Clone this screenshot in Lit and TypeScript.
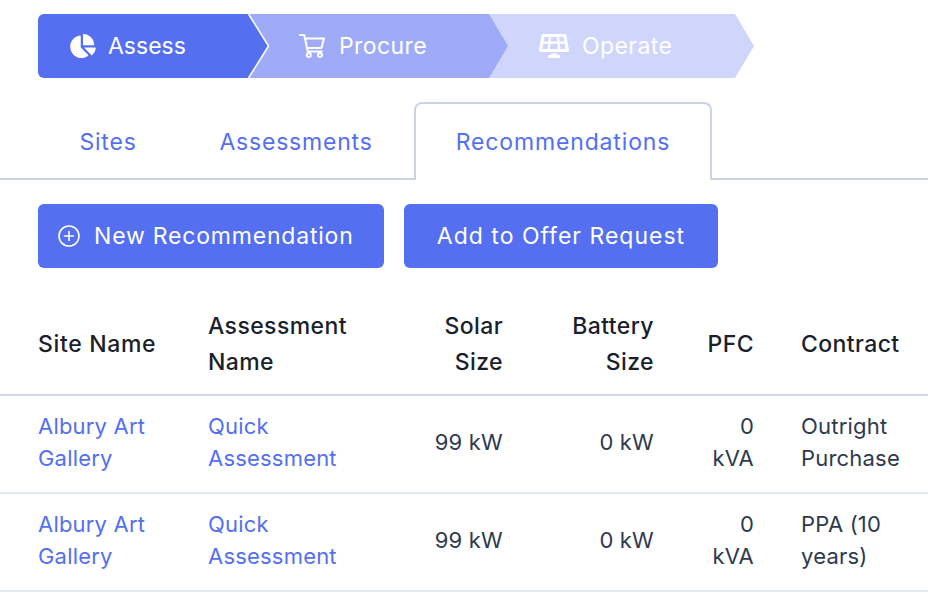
import { LitElement, html, css, svg } from "lit";
import { customElement } from "lit/decorators.js";

const PIE = "M527.79 288H290.5l158.03 158.03c6.04 6.04 15.98 6.53 22.19.68 38.7-36.46 65.32-85.61 73.13-140.86 1.34-9.46-6.51-17.85-16.06-17.85zm-15.83-64.8C503.72 103.74 408.26 8.28 288.8.04 279.68-.59 272 7.1 272 16.24V240h223.77c9.14 0 16.82-7.68 16.19-16.8zM224 288V50.71c0-9.55-8.39-17.4-17.84-16.06C86.99 51.49-4.1 155.6.14 280.37 4.5 408.51 114.83 513.59 243.03 511.98c50.4-.63 96.97-16.87 135.26-44.03 7.9-5.6 8.42-17.23 1.57-24.08L224 288z";
const SOLAR = "M431.98 448.01l-47.97.05V416h-128v32.21l-47.98.05c-8.82.01-15.97 7.16-15.98 15.99l-.05 31.73c-.01 8.85 7.17 16.03 16.02 16.02l223.96-.26c8.82-.01 15.97-7.16 15.98-15.98l.04-31.73c.01-8.85-7.17-16.03-16.02-16.02zM585.2 26.74C582.58 11.31 568.99 0 553.06 0H86.93C71 0 57.41 11.31 54.79 26.74-3.32 369.16.04 348.08.03 352c-.03 17.32 14.29 32 32.6 32h574.74c18.23 0 32.51-14.56 32.59-31.79.02-4.08 3.35 16.95-54.76-325.47zM259.83 64h120.33l9.77 96H250.06l9.77-96zm-75.17 256H71.09L90.1 208h105.97l-11.41 112zm16.29-160H98.24l16.29-96h96.19l-9.77 96zm32.82 160l11.4-112h149.65l11.4 112H233.77zm195.5-256h96.19l16.29 96H439.04l-9.77-96zm26.06 256l-11.4-112H549.9l19 112H455.33z";

const rows = [
  { contract: ["Outright", "Purchase"] },
  { contract: ["PPA (10", "years)"] },
];

@customElement("app-root")
export class AppRoot extends LitElement {
  static styles = css`
    :host {
      display: block;
      width: 928px;
      height: 614px;
      overflow: hidden;
      background: #fff;
      font-family: Inter, "Liberation Sans", sans-serif;
      font-size: 22px;
      color: #2e3a4e;
    }
    .steps { display: flex; padding: 14px 0 0 38px; height: 64px; }
    .step { display: grid; height: 64px; color: #fff; font-size: 23px; letter-spacing: 0.42px; }
    .step > * { grid-area: 1 / 1; }
    .step svg.bg { display: block; overflow: visible; }
    .s1 { width: 231px; z-index: 3; letter-spacing: 0; }
    .s2 { width: 260px; margin-left: -21px; z-index: 2; }
    .s3 { width: 267px; margin-left: -21px; z-index: 1; }
    .lbl { display: flex; align-items: center; height: 64px; z-index: 1; }
    .s1 .lbl { padding-left: 32px; gap: 12px; }
    .s2 .lbl { padding-left: 51px; gap: 14px; }
    .s3 .lbl { padding-left: 52px; gap: 13px; }
    .tabs {
      display: flex;
      margin-top: 24px;
      padding-left: 38px;
      border-bottom: 2px solid #cdd3e6;
      height: 76px;
    }
    .tab {
      box-sizing: border-box;
      height: 78px;
      text-align: center;
      line-height: 32px;
      padding-top: 22px;
      font-size: 23px;
      color: #546fef;
      letter-spacing: 0.8px;
      border: 2px solid transparent;
      border-bottom: 0;
    }
    .tab.active {
      border-color: #cdd3e6;
      border-radius: 8px 8px 0 0;
      background: #fff;
      letter-spacing: 0.85px;
    }
    .btns { display: flex; gap: 20px; padding: 24px 0 0 38px; }
    .btn {
      display: flex;
      align-items: center;
      justify-content: center;
      box-sizing: border-box;
      height: 64px;
      border-radius: 6px;
      background: #546fef;
      color: #fff;
      font-size: 23px;
      letter-spacing: 1px;
    }
    .b1 { width: 346px; gap: 14px; padding-left: 20px; justify-content: flex-start; letter-spacing: 0.8px; }
    .b2 { width: 314px; }
    table {
      border-collapse: separate;
      border-spacing: 0;
      table-layout: fixed;
      width: 928px;
      margin-top: 24px;
    }
    th, td { padding: 16px 24px; vertical-align: middle; text-align: left; white-space: nowrap; }
    th {
      font-weight: 500;
      font-size: 23px;
      color: #1a1f2b;
      line-height: 36px;
      border-bottom: 2px solid #d3d8e8;
      padding-bottom: 14px;
      letter-spacing: 0.4px;
    }
    th:first-child { letter-spacing: 0.65px; }
    td {
      line-height: 32px;
      border-bottom: 2px solid #e4e8f2;
      letter-spacing: 0.2px;
      padding-top: 14px;
      padding-bottom: 18px;
    }
    th:first-child, td:first-child { padding-left: 38px; }
    th.r, td.r { text-align: right; padding-right: 23px; }
    .link { color: #546fef; }
  `;

  private bg(w: number, fill: string, first = false) {
    const b = w - 19;
    if (first) {
      return html`<svg class="bg" width=${w} height="64" viewBox="0 0 ${w} 64">
        ${svg`<path d="M6 0H${b - 1.5}L${b + 18.5} 32L${b - 1.5} 64H6a6 6 0 0 1-6-6V6a6 6 0 0 1 6-6z" fill=${fill}/>
        <path d="M${b - 1.5} 0L${b + 18.5} 32L${b - 1.5} 64" fill="none" stroke="#fff" stroke-width="1.6"/>`}
      </svg>`;
    }
    return html`<svg class="bg" width=${w} height="64" viewBox="0 0 ${w} 64">
      ${svg`<path d="M0 0H${b}L${w} 32L${b} 64H0z" fill=${fill}/>`}
    </svg>`;
  }

  render() {
    return html`
      <div class="steps">
        <div class="step s1">
          ${this.bg(231, "#546fef", true)}
          <div class="lbl">
            <svg width="26" height="24" viewBox="0 0 544 512" fill="#fff"><path d=${PIE} /></svg>
            <span>Assess</span>
          </div>
        </div>
        <div class="step s2">
          ${this.bg(260, "#9fabf6")}
          <div class="lbl">
            <svg width="26" height="24" viewBox="0 0 26 24" fill="none" stroke="#fff" stroke-width="2" stroke-linecap="round" stroke-linejoin="round">
              <path d="M1 1h4.2l3.6 16.5h14" />
              <path d="M6 4.5h19l-2.6 9.4H8" />
              <circle cx="9.8" cy="21" r="2" />
              <circle cx="21" cy="21" r="2" />
            </svg>
            <span>Procure</span>
          </div>
        </div>
        <div class="step s3">
          ${this.bg(267, "#d0d6fb")}
          <div class="lbl">
            <svg width="30" height="24" viewBox="0 0 640 512" fill="#fff"><path d=${SOLAR} /></svg>
            <span>Operate</span>
          </div>
        </div>
      </div>

      <div class="tabs">
        <div class="tab" style="width:140px">Sites</div>
        <div class="tab" style="width:236px">Assessments</div>
        <div class="tab active" style="width:298px">Recommendations</div>
      </div>

      <div class="btns">
        <div class="btn b1">
          <svg width="22" height="22" viewBox="0 0 22 22" fill="none" stroke="#fff" stroke-width="1.6" stroke-linecap="round">
            <circle cx="11" cy="11" r="10" />
            <path d="M11 6.5v9M6.5 11h9" />
          </svg>
          <span>New Recommendation</span>
        </div>
        <div class="btn b2">Add to Offer Request</div>
      </div>

      <table>
        <colgroup>
          <col style="width:184px" /><col style="width:186px" /><col style="width:156px" />
          <col style="width:151px" /><col style="width:100px" /><col style="width:151px" />
        </colgroup>
        <thead>
          <tr>
            <th>Site Name</th>
            <th>Assessment<br />Name</th>
            <th class="r">Solar<br />Size</th>
            <th class="r">Battery<br />Size</th>
            <th class="r">PFC</th>
            <th>Contract</th>
          </tr>
        </thead>
        <tbody>
          ${rows.map(
            (r) => html`<tr>
              <td class="link">Albury Art<br />Gallery</td>
              <td class="link">Quick<br />Assessment</td>
              <td class="r">99 kW</td>
              <td class="r">0 kW</td>
              <td class="r">0<br />kVA</td>
              <td>${r.contract[0]}<br />${r.contract[1]}</td>
            </tr>`
          )}
        </tbody>
      </table>
    `;
  }
}
